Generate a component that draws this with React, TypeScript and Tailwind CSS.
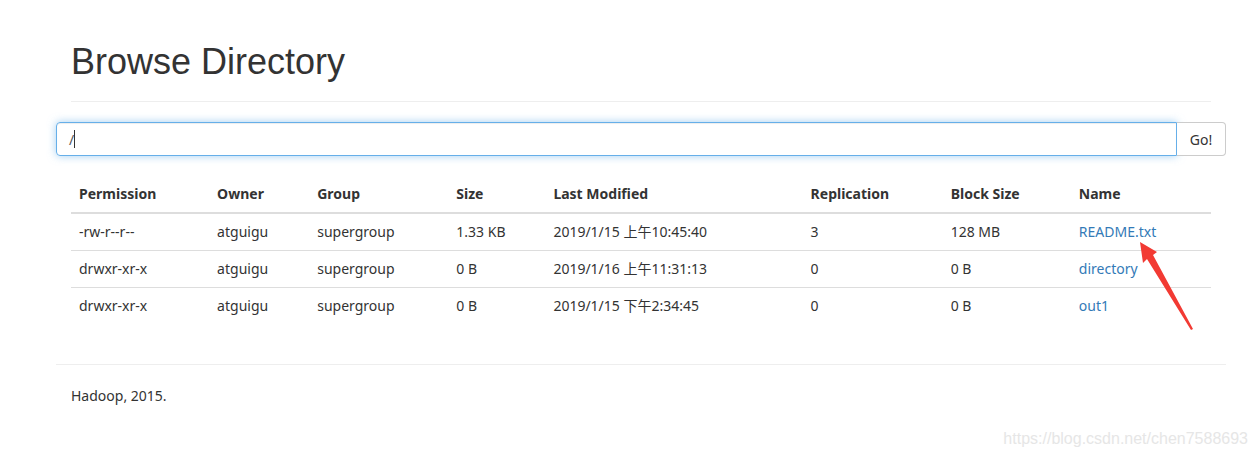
import React from "react";

const columns = [
  { label: "Permission", w: "w-[138px]" },
  { label: "Owner", w: "w-[100px]" },
  { label: "Group", w: "w-[139px]" },
  { label: "Size", w: "w-[97px]" },
  { label: "Last Modified", w: "w-[257px]" },
  { label: "Replication", w: "w-[140px]" },
  { label: "Block Size", w: "w-[128px]" },
  { label: "Name", w: "w-[140px]" },
];

const rows = [
  ["-rw-r--r--", "atguigu", "supergroup", "1.33 KB", "2019/1/15 上午10:45:40", "3", "128 MB", "README.txt"],
  ["drwxr-xr-x", "atguigu", "supergroup", "0 B", "2019/1/16 上午11:31:13", "0", "0 B", "directory"],
  ["drwxr-xr-x", "atguigu", "supergroup", "0 B", "2019/1/15 下午2:34:45", "0", "0 B", "out1"],
];

export default function App() {
  return (
    <div className="relative w-[1258px] h-[456px] bg-white overflow-hidden text-[14px] text-[#333] font-['Noto_Sans','Noto_Sans_CJK_SC',sans-serif]">
      <div className="ml-[56px] w-[1170px]">
        {/* page header */}
        <div className="mx-[15px] pt-[42px] pb-[19px] border-b border-[#eee]">
          <h1 className="text-[36px] leading-[40px] font-['Liberation_Sans',Arial,sans-serif] font-normal">
            Browse Directory
          </h1>
        </div>

        {/* path input */}
        <div className="flex mt-[20px] h-[34px]">
          <div className="flex-1 flex items-center px-[12px] border border-[#66afe9] rounded-l-[4px] shadow-[inset_0_1px_1px_rgba(0,0,0,0.075),0_0_8px_rgba(102,175,233,0.6)] text-[#555]">
            <span>/</span>
            <span className="w-px h-[18px] bg-[#333]" />
          </div>
          <button className="w-[49px] border border-l-0 border-[#ccc] rounded-r-[4px] bg-white text-[#333]">
            Go!
          </button>
        </div>

        {/* listing */}
        <table className="mx-[15px] mt-[20px] w-[1140px] border-collapse">
          <thead>
            <tr className="border-b-2 border-[#ddd]">
              {columns.map((c) => (
                <th key={c.label} className={`${c.w} text-left font-bold px-[8px] h-[37px] pb-[1px] leading-[20px]`}>
                  {c.label}
                </th>
              ))}
            </tr>
          </thead>
          <tbody>
            {rows.map((r, i) => (
              <tr key={i} className={i < rows.length - 1 ? "border-b border-[#ddd]" : ""}>
                {r.map((cell, j) => (
                  <td key={j} className="px-[8px] h-[37px] leading-[20px]">
                    {j === 7 ? <a className="text-[#337ab7]">{cell}</a> : cell}
                  </td>
                ))}
              </tr>
            ))}
          </tbody>
        </table>

        {/* footer */}
        <div className="mt-[40px] border-t border-[#eee] pt-[21px] px-[15px] leading-[20px]">
          Hadoop, 2015.
        </div>
      </div>

      {/* annotation arrow */}
      <svg className="absolute left-0 top-0" width="1258" height="456">
        <polygon
          points="1140,242 1157,252 1153,255 1193,329 1191,330 1147,259 1143,263"
          fill="#f23a33"
        />
      </svg>

      <div className="absolute right-[10px] top-[427px] text-[16px] text-[#e6e6e6] font-['Liberation_Sans',Arial,sans-serif]">
        https://blog.csdn.net/chen7588693
      </div>
    </div>
  );
}
